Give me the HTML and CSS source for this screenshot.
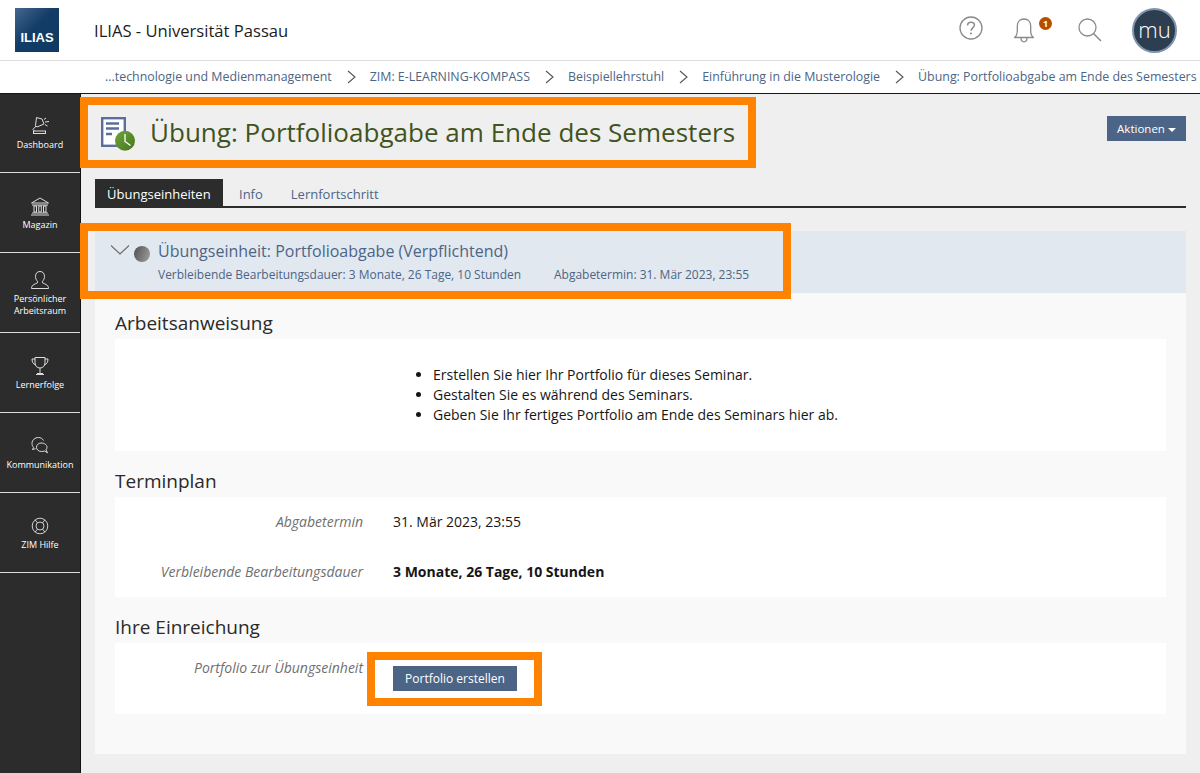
FILE: index.html
```html
<!DOCTYPE html>
<html lang="de">
<head>
<meta charset="utf-8">
<title>ILIAS - Universität Passau</title>
<link rel="stylesheet" href="styles.css">
</head>
<body>
<div class="page">
  <header class="topbar">
    <div class="logo"><span>ILIAS</span></div>
    <div class="site-title">ILIAS - Universität Passau</div>
    <div class="top-icons">
      <svg class="ti help" width="26" height="26" viewBox="0 0 26 26"><circle cx="13" cy="13" r="11" fill="none" stroke="#8a8a8a" stroke-width="1.3"/><path d="M9.6 10.4c0-2 1.5-3.2 3.4-3.2s3.4 1.2 3.4 3c0 2.600-3.400 2.700-3.400 5.500" fill="none" stroke="#8a8a8a" stroke-width="1.500"/><circle cx="13" cy="18.600" r="1" fill="#8a8a8a"/></svg>
      <div class="bell">
        <svg width="22" height="26" viewBox="0 0 22 26"><path d="M1.500 20.500c2.200-1.500 2.800-3.500 2.800-6.500V9c0-4.200 2.700-7 6.700-7s6.700 2.800 6.700 7v5c0 3 .6 5 2.800 6.500z" fill="none" stroke="#8a8a8a" stroke-width="1.300" stroke-linejoin="round"/><path d="M8 20.800c0 2.300 1.300 4 3 4s3-1.700 3-4" fill="none" stroke="#8a8a8a" stroke-width="1.300"/></svg>
        <span class="badge">1</span>
      </div>
      <svg class="ti search" width="26" height="26" viewBox="0 0 26 26"><circle cx="10.500" cy="10.500" r="8.500" fill="none" stroke="#8a8a8a" stroke-width="1.300"/><path d="M16.500 16.500l7.500 7.500" stroke="#8a8a8a" stroke-width="1.500"/></svg>
      <div class="avatar">mu</div>
    </div>
  </header>
  <nav class="crumbs">
    <a>...technologie und Medienmanagement</a><svg class="sep" width="9" height="14" viewBox="0 0 9 14"><path d="M1 1l7 6-7 6" fill="none" stroke="#555" stroke-width="1.100"/></svg>
    <a>ZIM: E-LEARNING-KOMPASS</a><svg class="sep" width="9" height="14" viewBox="0 0 9 14"><path d="M1 1l7 6-7 6" fill="none" stroke="#555" stroke-width="1.100"/></svg>
    <a>Beispiellehrstuhl</a><svg class="sep" width="9" height="14" viewBox="0 0 9 14"><path d="M1 1l7 6-7 6" fill="none" stroke="#555" stroke-width="1.100"/></svg>
    <a>Einführung in die Musterologie</a><svg class="sep" width="9" height="14" viewBox="0 0 9 14"><path d="M1 1l7 6-7 6" fill="none" stroke="#555" stroke-width="1.100"/></svg>
    <a>Übung: Portfolioabgabe am Ende des Semesters</a>
  </nav>
  <div class="main">
    <aside class="sidebar">
      <div class="side-item">
        <svg width="20" height="20" viewBox="0 0 20 20" fill="none" stroke="#ddd" stroke-width="1"><path d="M6.500 1.500l5.500 1.500 2 5-7 3-1.500-1.500z"/><path d="M6 10l-3 3.500 1.500 1.500"/><rect x="3.500" y="15" width="12" height="2.500"/><path d="M14 3.500l2-1.500M15 6l4-.5M15 8.500l2.500 1.500"/></svg>
        <span>Dashboard</span>
      </div>
      <div class="side-item">
        <svg width="20" height="20" viewBox="0 0 20 20" fill="none" stroke="#ddd" stroke-width="1"><path d="M1.500 7L10 2 18.500 7z"/><path d="M2 9h16M2 17h16M1 19h18"/><rect x="4" y="10" width="2.500" height="6"/><rect x="8.800" y="10" width="2.500" height="6"/><rect x="13.500" y="10" width="2.500" height="6"/></svg>
        <span>Magazin</span>
      </div>
      <div class="side-item">
        <svg width="20" height="20" viewBox="0 0 20 20" fill="none" stroke="#ddd" stroke-width="1"><path d="M10 1.500c-2.800 0-4.500 2-4.500 4.800 0 2.200.8 3.800 2 5v1.500c-2 1.200-5.500 1.800-6 4.700v1h17v-1c-.5-2.900-4-3.500-6-4.700v-1.500c1.200-1.200 2-2.800 2-5 0-2.800-1.700-4.800-4.500-4.800z"/></svg>
        <span>Persönlicher Arbeitsraum</span>
      </div>
      <div class="side-item">
        <svg width="20" height="20" viewBox="0 0 20 20" fill="none" stroke="#ddd" stroke-width="1"><path d="M5 1.500h10v5c0 3.500-2 5.500-5 5.500s-5-2-5-5.500z"/><path d="M5 3H2c0 3 1 5 4 6M15 3h3c0 3-1 5-4 6"/><path d="M10 12v5M6 18.500h8"/><path d="M7 17.500h6"/></svg>
        <span>Lernerfolge</span>
      </div>
      <div class="side-item">
        <svg width="20" height="20" viewBox="0 0 20 20" fill="none" stroke="#ddd" stroke-width="1"><path d="M13.500 4.500C12.500 2.500 10.500 1.500 8.500 1.500 5 1.500 2 4 2 7.500c0 1.500.5 2.800 1.500 3.800L2.500 13.500l3-.8"/><path d="M11 7c3.500 0 6 1.800 6 4.300 0 1-.5 1.900-1 2.500l1.500 3-3-1.800c-1 .3-2 .5-3 .5-3 0-5-1.800-5-4.200S8.500 7 11 7z"/></svg>
        <span>Kommunikation</span>
      </div>
      <div class="side-item">
        <svg width="20" height="20" viewBox="0 0 20 20" fill="none" stroke="#ccc" stroke-width="1"><circle cx="10" cy="10" r="7.800"/><circle cx="10" cy="10" r="4"/><path d="M5 3.800l2.500 3M15 3.800l-2.500 3M5 16.200l2.500-3M15 16.200l-2.500-3"/></svg>
        <span>ZIM Hilfe</span>
      </div>
    </aside>
    <main class="content">
      <div class="title-row">
        <div class="title-left">
          <svg class="obj-icon" width="36" height="36" viewBox="0 0 36 36"><defs><linearGradient id="clock" x1="0" y1="0" x2="1" y2="1"><stop offset="0" stop-color="#6da53a"/><stop offset="1" stop-color="#48761f"/></linearGradient></defs><rect x="2.200" y="2.200" width="22.600" height="27.600" fill="#fff" stroke="#5b6f9a" stroke-width="2.400"/><path d="M6 7.500h13M6 12.500h13M6 18h6" stroke="#5b6f9a" stroke-width="2.400"/><circle cx="25" cy="24.700" r="10" fill="url(#clock)"/><path d="M25 18v7.500l5.500 4" fill="none" stroke="#fff" stroke-width="1.300"/></svg>
          <h1>Übung: Portfolioabgabe am Ende des Semesters</h1>
        </div>
        <button class="btn btn-actions">Aktionen <i class="caret"></i></button>
      </div>
      <div class="tabs">
        <a class="tab active">Übungseinheiten</a>
        <a class="tab">Info</a>
        <a class="tab">Lernfortschritt</a>
      </div>
      <section class="panel">
        <div class="band">
          <svg class="chev" width="20" height="12" viewBox="0 0 20 12"><path d="M1 1.500l9 8.500 9-8.500" fill="none" stroke="#6a6a6a" stroke-width="1.100"/></svg>
          <span class="dot"></span>
          <div class="band-text">
            <div class="band-title">Übungseinheit: Portfolioabgabe (Verpflichtend)</div>
            <div class="band-meta"><span>Verbleibende Bearbeitungsdauer: 3 Monate, 26 Tage, 10 Stunden</span><span>Abgabetermin: 31. Mär 2023, 23:55</span></div>
          </div>
        </div>
        <div class="panel-body">
          <h2>Arbeitsanweisung</h2>
          <div class="card card-ins">
            <ul>
              <li>Erstellen Sie hier Ihr Portfolio für dieses Seminar.</li>
              <li>Gestalten Sie es während des Seminars.</li>
              <li>Geben Sie Ihr fertiges Portfolio am Ende des Seminars hier ab.</li>
            </ul>
          </div>
          <h2 class="h-term">Terminplan</h2>
          <div class="card card-term">
            <div class="row"><div class="lbl">Abgabetermin</div><div class="val">31. Mär 2023, 23:55</div></div>
            <div class="row"><div class="lbl">Verbleibende Bearbeitungsdauer</div><div class="val strong">3 Monate, 26 Tage, 10 Stunden</div></div>
          </div>
          <h2 class="h-sub">Ihre Einreichung</h2>
          <div class="card card-sub">
            <div class="row"><div class="lbl">Portfolio zur Übungseinheit</div><div class="val"><button class="btn btn-create">Portfolio erstellen</button></div></div>
          </div>
        </div>
      </section>
    </main>
  </div>
  <div class="mark mark-title"></div>
  <div class="mark mark-band"></div>
  <div class="mark mark-btn"></div>
</div>
</body>
</html>
```
FILE: styles.css
```css
* { box-sizing: border-box; }
html, body { margin: 0; padding: 0; }
body { font-family: "Open Sans", "Liberation Sans", sans-serif; color: #161616; background: #efefef; }
.page { position: relative; width: 1200px; height: 773px; overflow: hidden; display: flex; flex-direction: column; }

.topbar { height: 61px; background: #fff; border-bottom: 1px solid #ddd; display: flex; align-items: center; padding-left: 15px; flex: none; }
.logo { width: 44px; height: 44px; background: linear-gradient(135deg, #46688f 0%, #133c66 45%, #0f3a64 100%); display: flex; align-items: flex-end; justify-content: center; padding-bottom: 8px; }
.logo span { font-family: "Liberation Sans", sans-serif; font-weight: 700; font-size: 13px; line-height: 12px; color: #fff; }
.site-title { margin-left: 35px; font-size: 16.600px; font-weight: 500; color: #1c1c1c; }
.top-icons { margin-left: auto; display: flex; align-items: center; padding-right: 23px; }
.ti { display: block; }
.help { margin-top: -4px; }
.bell { position: relative; width: 22px; height: 26px; margin-left: 29px; }
.bell svg { display: block; }
.badge { position: absolute; left: 26px; top: 0; width: 13px; height: 13px; border-radius: 50%; background: #b54f00; color: #fff; font-size: 9px; font-weight: 700; line-height: 13px; text-align: center; }
.search { margin-left: 42px; }
.avatar { width: 45px; height: 45px; margin-left: 29px; border-radius: 50%; background: #2c3e50; border: 2px solid #7d95ad; color: #fff; font-size: 22px; line-height: 38px; text-align: center; font-weight: 300; }

.crumbs { height: 33px; flex: none; background: #fff; border-bottom: 1px solid #161616; display: flex; align-items: center; padding-left: 105px; white-space: nowrap; font-size: 12.400px; font-weight: 500; color: #4c6586; padding-bottom: 1px; }
.sep { margin: 0 14px 0 15px; flex: none; }

.main { flex: 1; display: flex; min-height: 0; }
.sidebar { width: 81px; flex: none; background: #2c2c2c; border-right: 1px solid #111; }
.side-item { height: 80px; border-bottom: 1px solid #ddd; display: flex; flex-direction: column; align-items: center; justify-content: center; color: #fff; font-size: 9px; font-weight: 500; line-height: 12px; text-align: center; width: 80px; padding-top: 1px; }
.side-item:first-child { height: 79px; padding-top: 0; }
.side-item svg { flex: none; margin-bottom: 3px; }
.side-item span { display: block; padding: 0 8px; }
.side-item:nth-child(5) span { padding: 0; }

.content { flex: 1; padding: 0 14px 0 14px; min-width: 0; }
.title-row { display: flex; justify-content: space-between; height: 85px; }
.title-left { display: flex; align-items: center; padding: 1px 0 0 5px; height: 74px; }
.obj-icon { margin-top: 5px; flex: none; }
.title-left h1 { margin: 0 0 0 14px; font-size: 26.040px; font-weight: 400; color: #3f5421; line-height: 34px; white-space: nowrap; }
.btn { border: 0; background: #4c6586; color: #fff; font-family: inherit; font-size: 11.500px; font-weight: 500; cursor: pointer; }
.btn-actions { width: 79px; height: 25px; margin-top: 22px; padding: 0; }
.caret { display: inline-block; border-top: 4px solid #fff; border-left: 4px solid transparent; border-right: 4px solid transparent; vertical-align: 1px; }

.tabs { display: flex; height: 29px; border-bottom: 2px solid #2c2c2c; font-size: 13px; }
.tab { padding: 0 12px; line-height: 30px; color: #4c6586; height: 28px; }
.tab + .tab { padding: 0 14px; margin: 0; }
.tab.active { background: #2c2c2c; color: #fff; font-weight: 500; margin-right: 2px; width: 128px; white-space: nowrap; }

.panel { margin-top: 23px; height: 523px; background: #f9f9f9; }
.band { height: 62px; background: #e2e8ef; display: flex; align-items: flex-start; padding: 13px 0 0 15px; color: #4c6586; }
.chev { flex: none; }
.dot { width: 16px; height: 16px; border-radius: 50%; background: linear-gradient(110deg, #505050, #a0a0a0); margin: 2px 0 0 4px; flex: none; }
.band-text { margin-left: 8px; margin-top: -4px; }
.band-title { font-size: 16px; line-height: 22px; }
.band-meta { display: flex; gap: 33px; font-size: 11.970px; line-height: 17px; margin-top: 4px; }

.panel-body { padding: 0 20px; }
h2 { margin: 0; font-size: 19px; font-weight: 400; color: #2a2a2a; line-height: 26px; }
.panel-body > h2:first-child { padding-top: 17px; height: 46px; }
.card { background: #fff; font-size: 14px; color: #161616; }
.card-ins { height: 112px; padding-top: 26px; }
.card-ins ul { margin: 0; padding-left: 318px; line-height: 20px; }
.h-term { margin-top: 17px; height: 29px; }
.card-term { height: 100px; padding-top: 15px; }
.h-sub { margin-top: 17px; height: 29px; }
.card-sub { height: 71px; padding-top: 15px; }
.row { display: flex; height: 50px; line-height: 20px; }
.lbl { width: 248px; text-align: right; font-style: italic; color: #6f6f6f; flex: none; }
.val { margin-left: 30px; }
.strong { font-weight: 700; }
.btn-create { width: 124px; height: 25px; margin-top: 8px; font-size: 12px; padding: 0; display: block; }

.mark { position: absolute; border: 8px solid #ff8200; pointer-events: none; }
.mark-title { left: 80px; top: 97px; width: 676px; height: 71px; }
.mark-band { left: 80px; top: 223px; width: 711px; height: 76px; }
.mark-btn { left: 367px; top: 652px; width: 175px; height: 54px; }
```
